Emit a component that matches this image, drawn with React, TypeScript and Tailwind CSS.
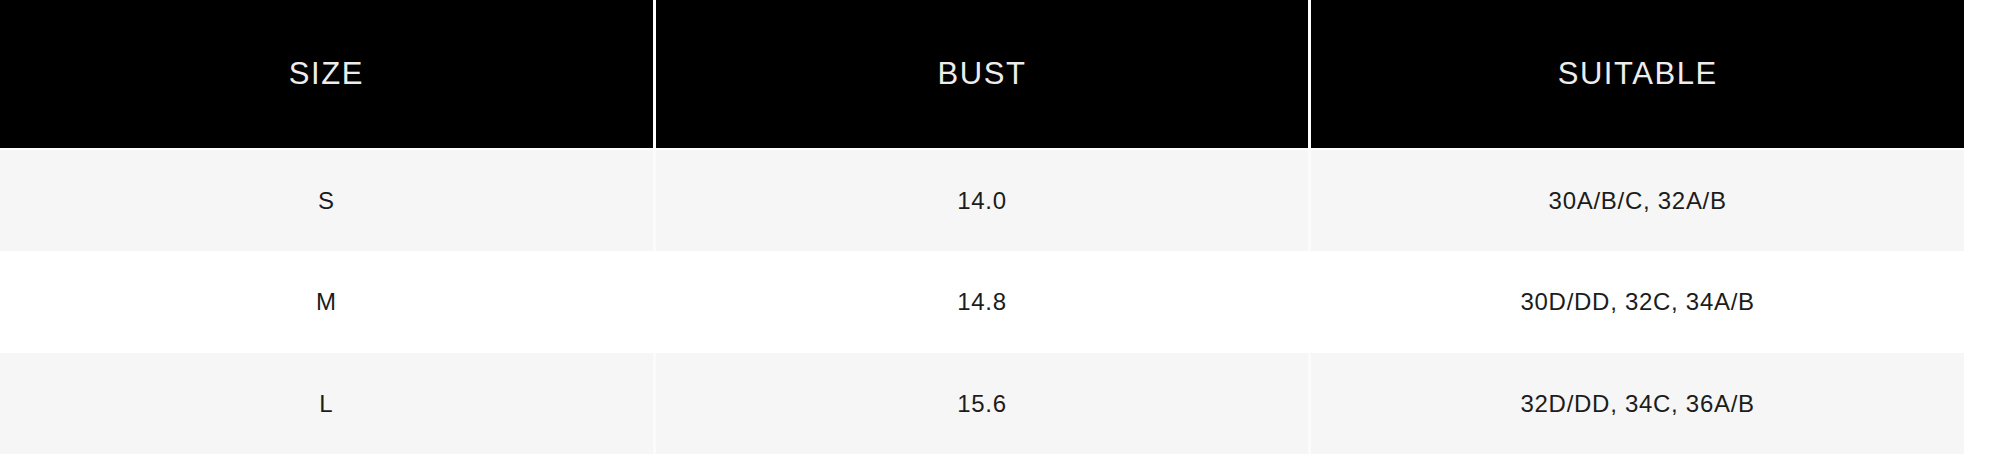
const rows = [
  { size: 'S', bust: '14.0', suitable: '30A/B/C, 32A/B' },
  { size: 'M', bust: '14.8', suitable: '30D/DD, 32C, 34A/B' },
  { size: 'L', bust: '15.6', suitable: '32D/DD, 34C, 36A/B' },
];

export default function App() {
  return (
    <div
      className="w-[2000px] h-[458px] bg-white overflow-hidden"
      style={{ fontFamily: '"Liberation Sans", Arial, sans-serif' }}
    >
      <div className="w-[1964px]">
        {/* header */}
        <div className="grid grid-cols-3 gap-x-[3px] h-[148px]">
          {['SIZE', 'BUST', 'SUITABLE'].map((h) => (
            <div
              key={h}
              className="bg-black flex items-center justify-center text-[#ededed] text-[31px] tracking-[0.05em]"
            >
              {h}
            </div>
          ))}
        </div>

        {/* body */}
        <div className="mt-[2px]">
          {rows.map((r, i) => (
            <div
              key={r.size}
              className={`grid grid-cols-3 gap-x-[3px] ${
                i === 1 ? 'h-[102px] bg-white' : 'h-[101px] bg-[#fbfbfb]'
              }`}
            >
              {[r.size, r.bust, r.suitable].map((v, j) => (
                <div
                  key={j}
                  className={`flex items-center justify-center text-[24px] text-[#1c1c1c] tracking-[0.03em] ${
                    i === 1 ? 'bg-white' : 'bg-[#f6f6f6]'
                  }`}
                >
                  {v}
                </div>
              ))}
            </div>
          ))}
        </div>
      </div>
    </div>
  );
}
